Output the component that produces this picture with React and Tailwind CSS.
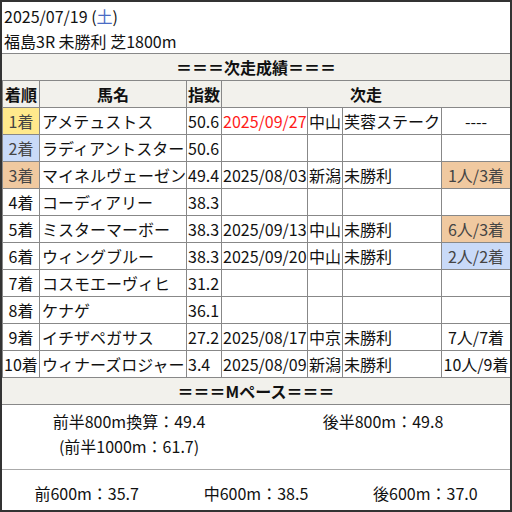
const rows = [
  { rank: "1着", rankBg: "bg-[#ffe98c]", name: "アメテュストス", idx: "50.6", date: "2025/09/27", red: true, venue: "中山", race: "芙蓉ステーク", result: "----" },
  { rank: "2着", rankBg: "bg-[#c9daf8]", name: "ラディアントスター", idx: "50.6" },
  { rank: "3着", rankBg: "bg-[#f0c9a0]", name: "マイネルヴェーゼン", idx: "49.4", date: "2025/08/03", venue: "新潟", race: "未勝利", result: "1人/3着", resultBg: "bg-[#f0c9a0]" },
  { rank: "4着", name: "コーディアリー", idx: "38.3" },
  { rank: "5着", name: "ミスターマーボー", idx: "38.3", date: "2025/09/13", venue: "中山", race: "未勝利", result: "6人/3着", resultBg: "bg-[#f0c9a0]" },
  { rank: "6着", name: "ウィングブルー", idx: "38.3", date: "2025/09/20", venue: "中山", race: "未勝利", result: "2人/2着", resultBg: "bg-[#c9daf8]" },
  { rank: "7着", name: "コスモエーヴィヒ", idx: "31.2" },
  { rank: "8着", name: "ケナゲ", idx: "36.1" },
  { rank: "9着", name: "イチザペガサス", idx: "27.2", date: "2025/08/17", venue: "中京", race: "未勝利", result: "7人/7着" },
  { rank: "10着", name: "ウィナーズロジャー", idx: "3.4", date: "2025/08/09", venue: "新潟", race: "未勝利", result: "10人/9着" },
];

const cell = "border border-[#888] h-[27px] p-0 whitespace-nowrap overflow-hidden";

export default function App() {
  return (
    <div
      className="w-[512px] h-[512px] border-2 border-[#333] bg-white text-[16px] text-[#111] leading-[25px] overflow-hidden"
      style={{ fontFamily: '"Noto Sans CJK JP", "Noto Sans", sans-serif' }}
    >
      <div className="h-[51px] px-[2px] pt-[2px]">
        <div>
          2025/07/19 (<span className="text-[#4a6cc4]">土</span>)
        </div>
        <div>福島3R 未勝利 芝1800m</div>
      </div>

      <div className="h-[27px] border-t border-[#888] bg-[#f2f1ec] flex items-center justify-center font-bold">
        ＝＝＝次走成績＝＝＝
      </div>

      <table className="w-full table-fixed border-collapse">
        <colgroup>
          <col className="w-[37px]" />
          <col className="w-[147px]" />
          <col className="w-[35px]" />
          <col className="w-[86px]" />
          <col className="w-[35px]" />
          <col className="w-[99px]" />
          <col className="w-[69px]" />
        </colgroup>
        <thead>
          <tr className="bg-[#f2f1ec] font-bold">
            <th className={`${cell} text-center`}>着順</th>
            <th className={`${cell} text-center`}>馬名</th>
            <th className={`${cell} text-left pl-[1px]`}>指数</th>
            <th className={`${cell} text-center`} colSpan={4}>
              次走
            </th>
          </tr>
        </thead>
        <tbody>
          {rows.map((r) => (
            <tr key={r.rank}>
              <td className={`${cell} text-center ${r.rankBg ? r.rankBg + " text-[#444]" : ""}`}>{r.rank}</td>
              <td className={`${cell} pl-[2px]`}>{r.name}</td>
              <td className={`${cell} pl-[1px]`}>{r.idx}</td>
              <td className={`${cell} pl-[1px] ${r.red ? "text-[#ff1a1a]" : ""}`}>{r.date}</td>
              <td className={`${cell} pl-[1px]`}>{r.venue}</td>
              <td className={`${cell} pl-[1px]`}>{r.race}</td>
              <td className={`${cell} text-center ${r.resultBg ? r.resultBg + " text-[#444]" : ""}`}>{r.result}</td>
            </tr>
          ))}
        </tbody>
      </table>

      <div className="h-[27px] border-b border-[#888] bg-[#f2f1ec] flex items-center justify-center font-bold">
        ＝＝＝Mペース＝＝＝
      </div>

      <div className="h-[65px] pt-[4px] grid grid-cols-2 text-center border-b border-[#aaa]">
        <div>
          <div>前半800m換算：49.4</div>
          <div>(前半1000m：61.7)</div>
        </div>
        <div>後半800m：49.8</div>
      </div>

      <div className="pt-[11px] grid grid-cols-3 text-center">
        <div>前600m：35.7</div>
        <div>中600m：38.5</div>
        <div>後600m：37.0</div>
      </div>
    </div>
  );
}
